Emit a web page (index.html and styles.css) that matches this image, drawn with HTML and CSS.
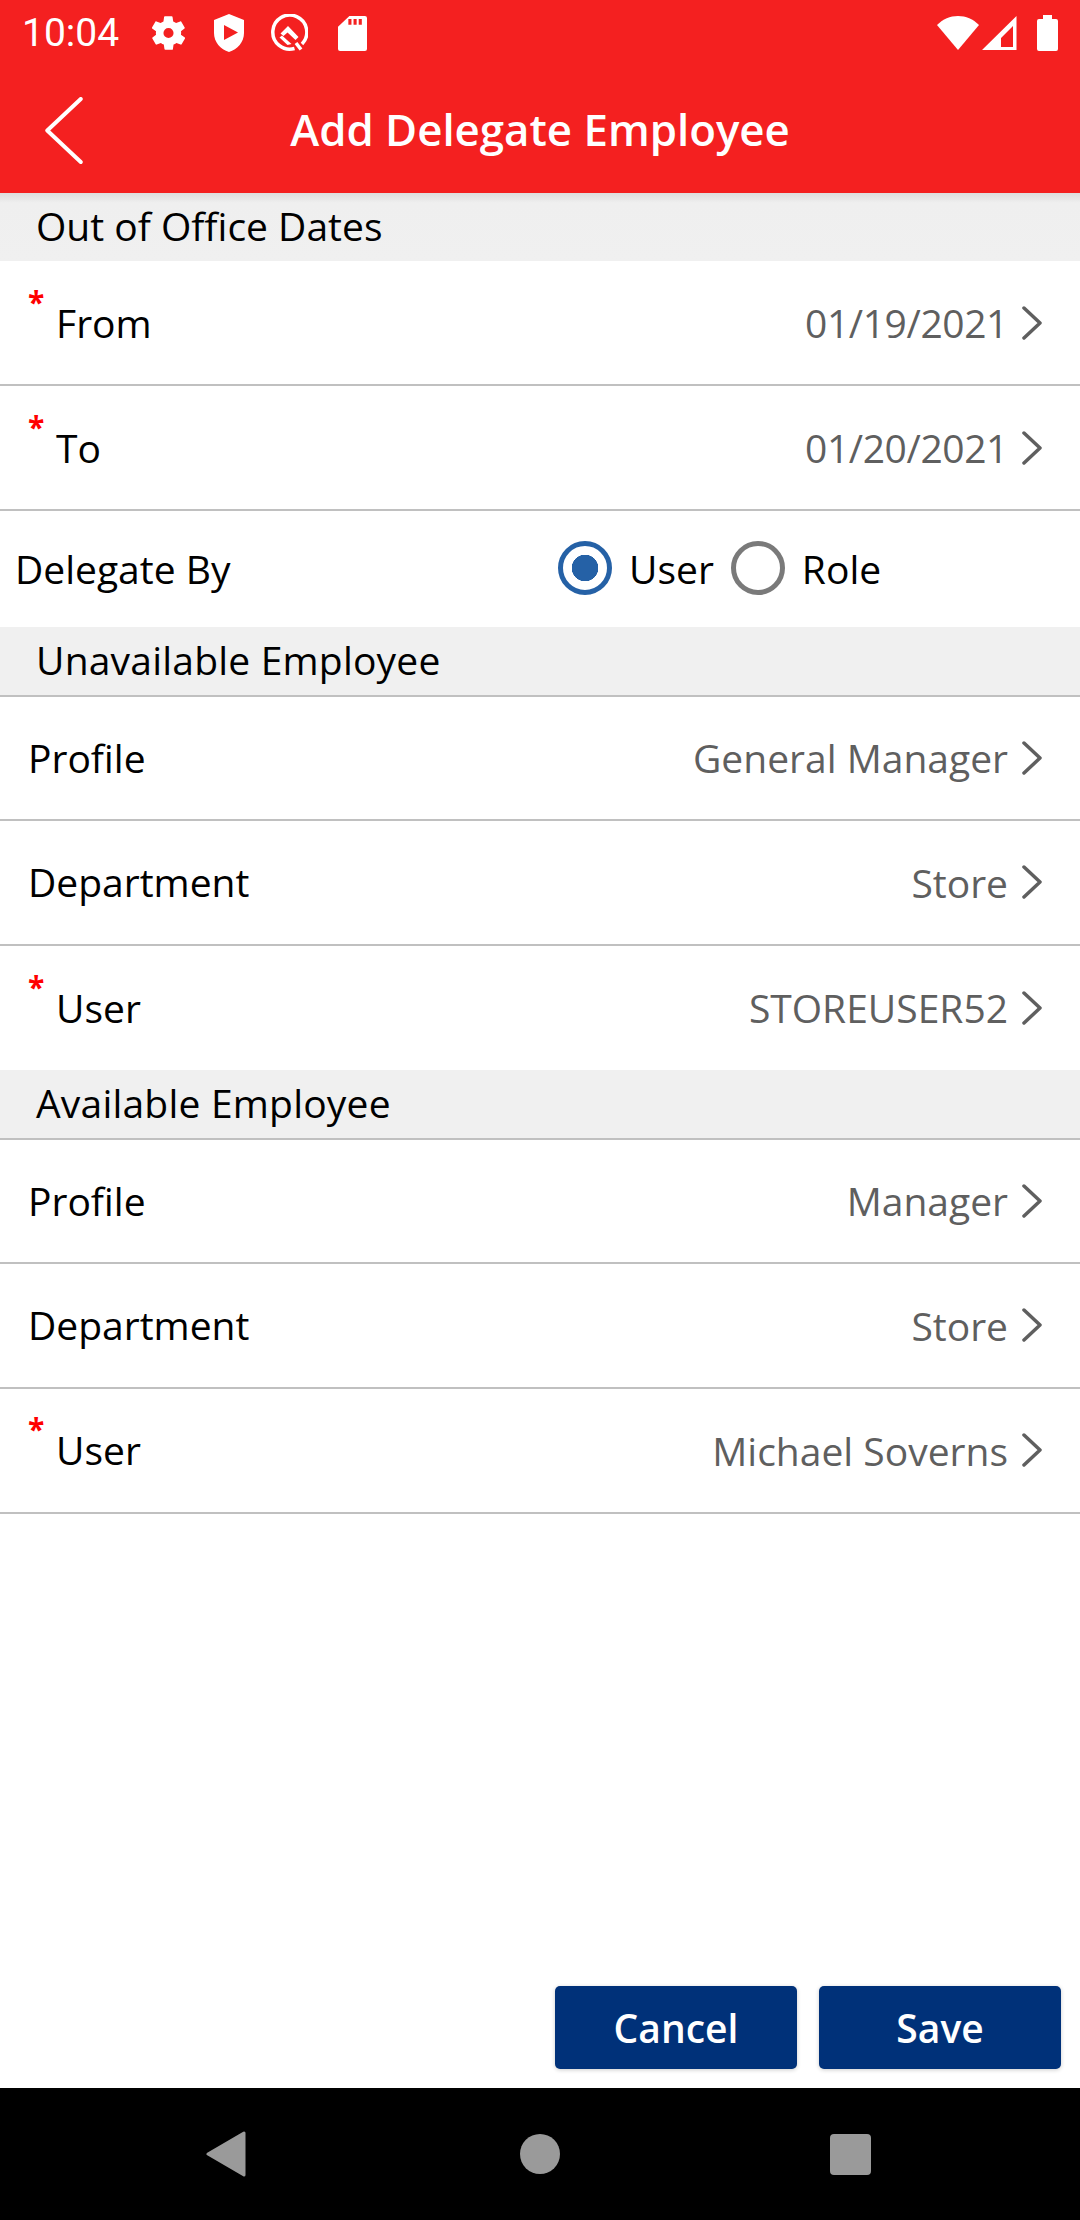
FILE: index.html
```html
<!DOCTYPE html>
<html lang="en">
<head>
<meta charset="utf-8">
<title>Add Delegate Employee</title>
<link rel="stylesheet" href="styles.css">
</head>
<body>
<div class="screen">
  <header class="top">
    <div class="status">
      <span class="clock">10:04</span>
      <svg class="si gear" viewBox="2.200 1.900 19.600 20.200"><path fill="#fff" fill-rule="evenodd" d="M19.400 13c0-.3.1-.6.1-1s0-.7-.1-1l2.100-1.600c.2-.2.2-.4.1-.6l-2-3.500c-.1-.2-.4-.3-.6-.2l-2.500 1c-.5-.4-1.100-.7-1.700-1l-.4-2.600c0-.3-.2-.5-.5-.5h-4c-.3 0-.5.2-.5.4l-.4 2.700c-.6.2-1.100.6-1.700 1l-2.500-1c-.2-.1-.5 0-.6.2l-2 3.500c-.1.2-.1.4.1.6L4.600 11c0 .3-.1.7-.1 1s0 .7.1 1l-2.100 1.600c-.2.2-.2.4-.1.6l2 3.500c.1.2.4.3.6.2l2.500-1c.5.4 1.100.7 1.700 1l.4 2.600c0 .3.2.5.5.5h4c.3 0 .5-.2.5-.4l.4-2.700c.6-.2 1.100-.6 1.700-1l2.500 1c.2.1.5 0 .6-.2l2-3.500c.1-.2.1-.4-.1-.6zM12 15a3 3 0 1 1 0-6 3 3 0 0 1 0 6z"/></svg>
      <svg class="si shield" viewBox="1 0 30 38"><path fill="#fff" fill-rule="evenodd" d="M16 0 31 6v13c0 9-6.500 16.500-15 19C7.500 35.500 1 28 1 19V6zM11 11v15l14-7.500z"/></svg>
      <svg class="si q" viewBox="0 0 38 38"><g fill="none" stroke="#fff" stroke-width="3.500"><path d="M24.500 34.500A17 17 0 1 1 32 30"/><path d="M26 29l5 6.500"/></g><path fill="#fff" d="M18 12 28.500 23 25.500 26 17.500 18.500 13.500 22 10.500 19.500z"/><path fill="#fff" d="M9.500 23.500 12 21.500 21.500 30 17.500 31z"/></svg>
      <svg class="si sd" viewBox="0 0 28 36" preserveAspectRatio="none"><path fill="#fff" fill-rule="evenodd" d="M11 0h15a2 2 0 0 1 2 2v32a2 2 0 0 1-2 2H2a2 2 0 0 1-2-2V11zM10 3v6h3V3zM15 3v6h3V3zM20 3v6h3V3z"/></svg>
      <span class="spacer"></span>
      <svg class="si wifi" viewBox="0 0 42 34"><path fill="#fff" d="M0 9C6 3 13 0 21 0s15 3 21 9L21 34z"/></svg>
      <svg class="si signal" viewBox="0 0 35 34"><path fill="#fff" fill-rule="evenodd" d="M34.500 0v34H0zM31 10 19 22v9h12z"/></svg>
      <svg class="si batt" viewBox="0 0 21 36"><path fill="#fff" d="M6 0h9v4h4a2 2 0 0 1 2 2v28a2 2 0 0 1-2 2H2a2 2 0 0 1-2-2V6a2 2 0 0 1 2-2h4z"/></svg>
    </div>
    <div class="bar">
      <svg class="back" viewBox="0 0 40 68"><path fill="none" stroke="#fff" stroke-width="4" stroke-linecap="round" stroke-linejoin="round" d="M37 2 3 34l34 32"/></svg>
      <h1 class="title">Add Delegate Employee</h1>
    </div>
  </header>
  <main class="form">
    <div class="section first">Out of Office Dates</div>
    <div class="row line"><span class="label"><span class="req">*</span>From</span><span class="value date">01/19/2021</span><svg class="chev" viewBox="0 0 20 34"><path d="M2 2l16 15L2 32"/></svg></div>
    <div class="row line"><span class="label"><span class="req">*</span>To</span><span class="value date">01/20/2021</span><svg class="chev" viewBox="0 0 20 34"><path d="M2 2l16 15L2 32"/></svg></div>
    <div class="delegate">
      <span class="dlabel">Delegate By</span>
      <div class="radios">
        <span class="radio on"></span><span class="rtext">User</span>
        <span class="radio"></span><span class="rtext">Role</span>
      </div>
    </div>
    <div class="section ruled">Unavailable Employee</div>
    <div class="row line"><span class="label">Profile</span><span class="value">General Manager</span><svg class="chev" viewBox="0 0 20 34"><path d="M2 2l16 15L2 32"/></svg></div>
    <div class="row line"><span class="label">Department</span><span class="value">Store</span><svg class="chev" viewBox="0 0 20 34"><path d="M2 2l16 15L2 32"/></svg></div>
    <div class="row"><span class="label"><span class="req">*</span>User</span><span class="value">STOREUSER52</span><svg class="chev" viewBox="0 0 20 34"><path d="M2 2l16 15L2 32"/></svg></div>
    <div class="section ruled">Available Employee</div>
    <div class="row line"><span class="label">Profile</span><span class="value">Manager</span><svg class="chev" viewBox="0 0 20 34"><path d="M2 2l16 15L2 32"/></svg></div>
    <div class="row line"><span class="label">Department</span><span class="value">Store</span><svg class="chev" viewBox="0 0 20 34"><path d="M2 2l16 15L2 32"/></svg></div>
    <div class="row line"><span class="label"><span class="req">*</span>User</span><span class="value">Michael Soverns</span><svg class="chev" viewBox="0 0 20 34"><path d="M2 2l16 15L2 32"/></svg></div>
  </main>
  <div class="actions">
    <button class="btn">Cancel</button>
    <button class="btn">Save</button>
  </div>
  <nav class="nav">
    <svg class="n-back" viewBox="0 0 40 46"><path fill="#9a9a9a" stroke="#9a9a9a" stroke-width="3" stroke-linejoin="round" d="M2 23 38 2v42z"/></svg>
    <span class="n-home"></span>
    <span class="n-rec"></span>
  </nav>
</div>
</body>
</html>
```
FILE: styles.css
```css
* { box-sizing: border-box; }
html, body { margin: 0; padding: 0; }
body { font-family: "Open Sans", "Noto Sans", sans-serif; background: #fff; color: #000; }
.screen { width: 1080px; height: 2220px; display: flex; flex-direction: column; overflow: hidden; }

.top { background: #f42020; height: 193px; flex: none; position: relative; z-index: 1; }
.status { height: 70px; display: flex; align-items: center; padding: 0 0 4px 22px; }
.clock { font-family: Roboto, sans-serif; font-size: 39px; color: #fff; width: 130px; flex: none; }
.si { display: block; flex: none; }
.gear { width: 33px; height: 34px; margin-right: 28px; }
.shield { width: 32px; height: 38px; margin-right: 25px; }
.q { width: 38px; height: 38px; margin-right: 30px; }
.sd { width: 29px; height: 35px; }
.spacer { flex: 1; }
.wifi { width: 42px; height: 34px; margin-right: 3px; }
.signal { width: 35px; height: 34px; margin-right: 20px; }
.batt { width: 21px; height: 36px; margin-right: 22px; }
.bar { height: 123px; position: relative; display: flex; align-items: center; justify-content: center; padding-bottom: 3px; }
.back { position: absolute; left: 44px; top: 27px; width: 40px; height: 67px; }
.title { margin: 0; font-size: 43.800px; font-weight: 600; color: #fff; line-height: 1; }

.form { flex: 1; display: flex; flex-direction: column; }
.section { height: 68px; flex: none; background: #f0f0f0; padding: 8px 0 0 36px; font-size: 39px; line-height: 50px; }
.section.first { background: linear-gradient(#dedede, #efefef 10px, #f0f0f0); }
.section.ruled { height: 69.500px; padding-top: 8px; border-bottom: 2px solid #c0c0c0; letter-spacing: .2px; }
.row { height: 125px; flex: none; display: flex; align-items: center; padding: 0 38px 0 28px; font-size: 39px; }
.ruled ~ .row { height: 124.500px; }
.ruled ~ .row:last-child { height: 125.500px; }
.row.line { border-bottom: 2px solid #c0c0c0; }
.label { flex: 1; position: relative; line-height: 50px; }
.req { color: #f00; display: inline-block; width: 28px; font-size: 30px; font-weight: 700; position: relative; top: -25px; line-height: 1; }
.value { color: #5f5f5f; }
.date { letter-spacing: -.4px; }
.chev { width: 20px; height: 34px; margin-left: 14px; fill: none; stroke: #5f5f5f; stroke-width: 3.500; stroke-linecap: round; stroke-linejoin: round; }

.delegate { height: 116px; flex: none; display: flex; align-items: center; padding: 0 0 2px 15px; font-size: 39px; }
.dlabel { width: 543px; flex: none; }
.radios { display: flex; align-items: center; }
.radio { width: 54px; height: 54px; border-radius: 50%; border: 5px solid #7a7a7a; flex: none; background: #fff; }
.radio.on { border-color: #2561a6; background: radial-gradient(circle, #2561a6 0 13px, #fff 13.500px); }
.rtext { margin-left: 17px; margin-right: 17px; }

.actions { flex: none; height: 102px; display: flex; justify-content: flex-end; gap: 22px; padding: 0 19px 19px 0; }
.btn { width: 242px; height: 83px; border: 0; border-radius: 5px; background: #003179; color: #fff; font: 600 39px "Open Sans", "Noto Sans", sans-serif; box-shadow: 0 1px 4px rgba(0,0,0,.2); padding: 0; }

.nav { height: 132px; flex: none; background: #000; position: relative; }
.n-back { position: absolute; left: 206px; top: 43px; width: 40px; height: 46px; }
.n-home { position: absolute; left: 520px; top: 46px; width: 40px; height: 40px; border-radius: 50%; background: #9a9a9a; }
.n-rec { position: absolute; left: 830px; top: 46px; width: 41px; height: 41px; border-radius: 4px; background: #9a9a9a; }
```
